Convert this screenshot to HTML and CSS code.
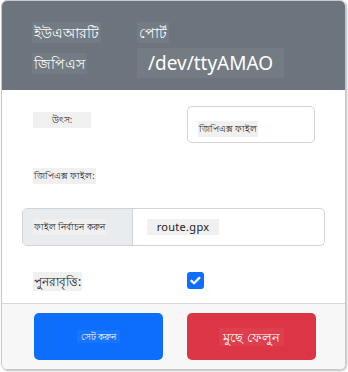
FILE: index.html
```html
<!DOCTYPE html>
<html lang="bn">
<head>
  <meta charset="UTF-8">
  <meta name="viewport" content="width=device-width, initial-scale=1">
  <title>GPS Source</title>
  <link rel="stylesheet" href="styles.css">
</head>
<body>
  <div class="card">
    <!-- Header -->
    <div class="card-header">
      <div class="hdr-row">
        <div class="hdr-col"><span class="hdr-label">ইউএআরটি</span></div>
        <span class="hdr-label">পোর্ট</span>
      </div>
      <div class="hdr-row">
        <div class="hdr-col"><span class="hdr-label">জিপিএস</span></div>
        <span class="port-value">/dev/ttyAMAO</span>
      </div>
    </div>

    <!-- Body -->
    <div class="card-body">
      <div class="form-row">
        <div class="col-label"><span class="lbl lbl-center">উৎস:</span></div>
        <div class="col-field">
          <div class="select-box"><span class="lbl">জিপিএক্স ফাইল</span></div>
        </div>
      </div>

      <div class="form-row row-file-label">
        <span class="lbl">জিপিএক্স ফাইল:</span>
      </div>

      <div class="file-group">
        <div class="file-btn"><span class="lbl">ফাইল নির্বাচন করুন</span></div>
        <div class="file-name"><span class="lbl name">route.gpx</span></div>
      </div>

      <div class="form-row row-repeat">
        <div class="col-label"><span class="lbl big">পুনরাবৃত্তি:</span></div>
        <div class="col-field">
          <span class="check">
            <svg width="17" height="17" viewBox="0 0 16 16"><path d="M4.2 8.3l2.4 2.3 5-5" fill="none" stroke="#fff" stroke-width="2.2" stroke-linecap="round" stroke-linejoin="round"/></svg>
          </span>
        </div>
      </div>
    </div>

    <!-- Footer -->
    <div class="card-footer">
      <button class="btn btn-primary"><span class="btn-text small">সেট করুন</span></button>
      <button class="btn btn-danger"><span class="btn-text">মুছে ফেলুন</span></button>
    </div>
  </div>
</body>
</html>
```

FILE: styles.css
```css
* {
  box-sizing: border-box;
  margin: 0;
  padding: 0;
}
body {
  font-family: 'Noto Sans', 'Liberation Sans', sans-serif;
  background: #fff;
  padding: 0 2px 2px 1px;
}
/* Card */
.card {
  width: 345px;
  height: 370px;
  border: 1px solid #c8c8c8;
  border-radius: 6px;
  box-shadow: 1px 1px 2px rgba(0, 0, 0, 0.25);
  overflow: hidden;
  display: flex;
  flex-direction: column;
}
.card-header {
  background: #6c757d;
  height: 89px;
  padding: 20px 0 0 30px;
  color: #fff;
}
.hdr-row {
  display: flex;
  align-items: center;
}
.hdr-row + .hdr-row {
  margin-top: 5px;
}
.hdr-col {
  width: 105px;
  flex: none;
}
.hdr-label {
  display: inline-block;
  background: rgba(255, 255, 255, 0.05);
  font-size: 14px;
  line-height: 21px;
  padding: 0 2px;
}
.port-value {
  background: rgba(255, 255, 255, 0.05);
  font-size: 19px;
  line-height: 30px;
  width: 147px;
  text-align: center;
}
/* Body */
.card-body {
  flex: 1;
  background: #fff;
  padding: 16px 20px 0 20px;
}
.form-row {
  display: flex;
}
.col-label {
  width: 165px;
  padding-left: 11px;
  flex: none;
}
.lbl {
  display: inline-block;
  background: #f0f0f0;
  font-size: 9px;
  line-height: 16px;
  color: #222;
  padding: 0 1px;
}
.lbl-center {
  width: 58px;
  text-align: center;
  margin-top: 4px;
}
.select-box {
  width: 128px;
  height: 37px;
  border: 1px solid #ced4da;
  border-radius: 5px;
  padding: 8px 0 0 10px;
}
.row-file-label {
  margin-top: 25px;
  padding-left: 11px;
}
.file-group {
  margin-top: 24px;
  display: flex;
  height: 38px;
  border: 1px solid #ced4da;
  border-radius: 5px;
  overflow: hidden;
}
.file-btn {
  width: 110px;
  background: #e9ecef;
  border-right: 1px solid #ced4da;
  display: flex;
  align-items: center;
  padding-left: 10px;
}
.file-name {
  flex: 1;
  display: flex;
  align-items: center;
  padding-left: 14px;
}
.lbl.name {
  font-size: 11px;
  width: 72px;
  text-align: center;
  letter-spacing: 0.3px;
}
.row-repeat {
  margin-top: 23px;
  align-items: center;
}
.lbl.big {
  font-size: 12px;
  line-height: 19px;
}
.check {
  display: flex;
  width: 17px;
  height: 17px;
  background: #0d6efd;
  border-radius: 3px;
}
/* Footer */
.card-footer {
  height: 66px;
  background: #f7f7f7;
  border-top: 1px solid #d8d8d8;
  display: flex;
  align-items: center;
  padding: 0 0 0 32px;
  gap: 24px;
}
.btn {
  width: 129px;
  height: 47px;
  border: none;
  border-radius: 5px;
  color: #fff;
  font-family: inherit;
}
.btn-primary {
  background: #0d6efd;
}
.btn-danger {
  background: #dc3545;
}
.btn-text {
  background: rgba(255, 255, 255, 0.05);
  font-size: 13px;
  line-height: 22px;
  padding: 0 4px;
}
.btn-text.small {
  font-size: 9px;
}
```
